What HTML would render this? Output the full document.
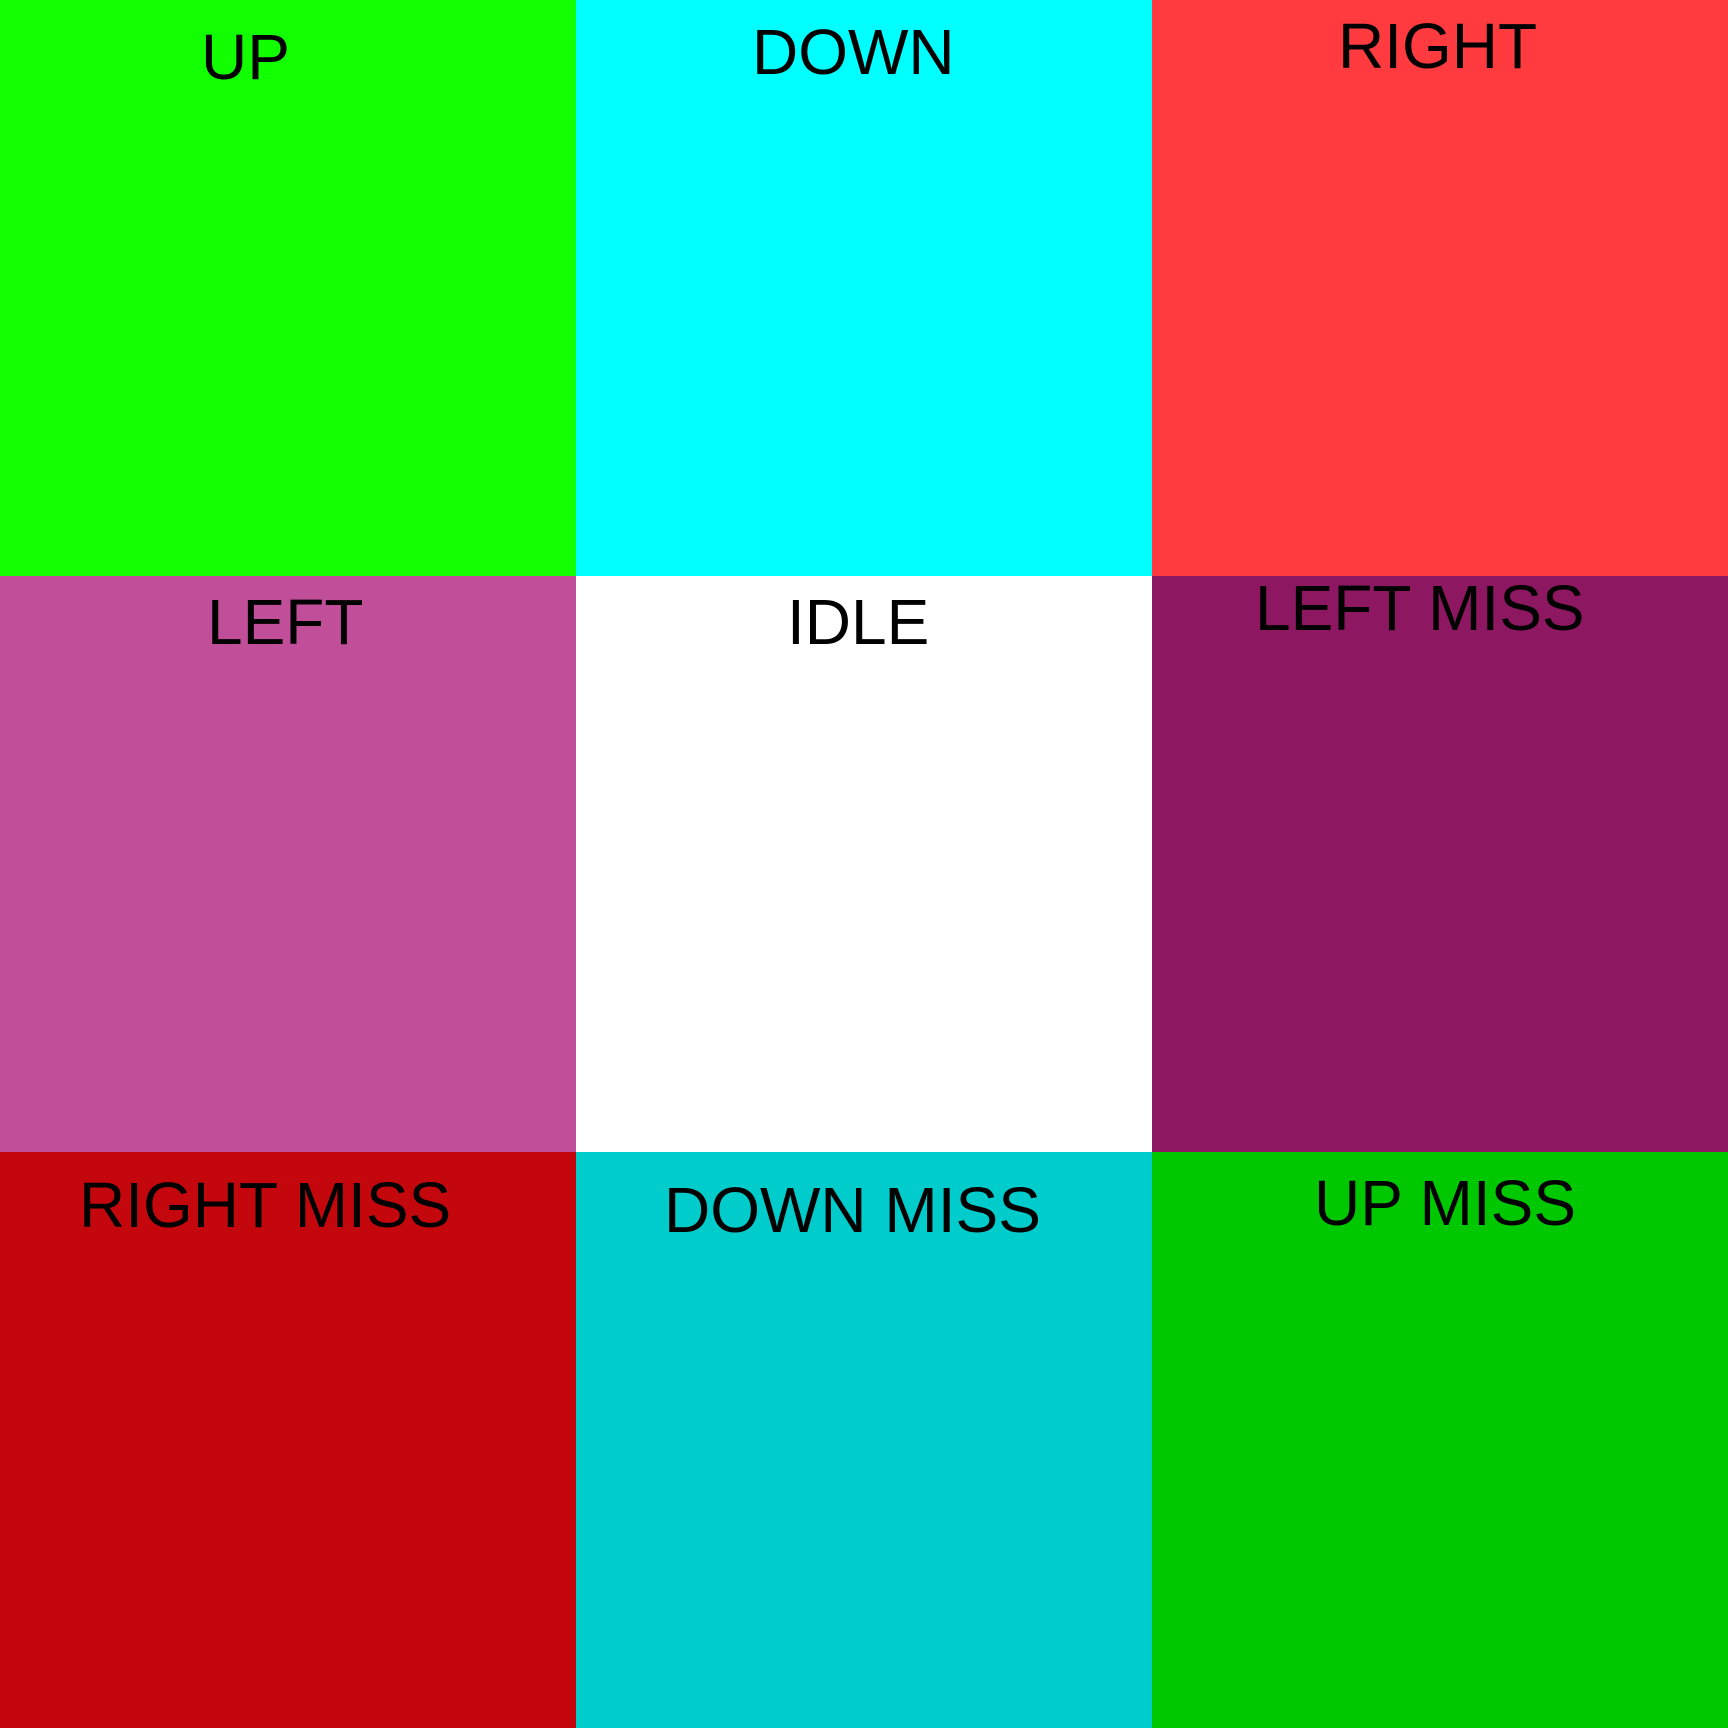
<!DOCTYPE html>
<html><head><meta charset="utf-8"><style>
html,body{margin:0;padding:0;width:1728px;height:1728px;overflow:hidden}
.c{position:absolute;width:576px;height:576px}
.t{position:absolute;font-family:"Liberation Sans",Arial,sans-serif;font-size:64px;line-height:1;color:#000;white-space:nowrap}
</style></head><body>
<div class="c" style="left:0;top:0;background:#11ff00"></div>
<div class="c" style="left:576px;top:0;background:#00ffff"></div>
<div class="c" style="left:1152px;top:0;background:#ff3b3f"></div>
<div class="c" style="left:0;top:576px;background:#c04e98"></div>
<div class="c" style="left:576px;top:576px;background:#ffffff"></div>
<div class="c" style="left:1152px;top:576px;background:#8e1762"></div>
<div class="c" style="left:0;top:1152px;background:#c4070c"></div>
<div class="c" style="left:576px;top:1152px;background:#00cccc"></div>
<div class="c" style="left:1152px;top:1152px;background:#00c800"></div>

<div class="t" style="left:201px;top:25px">UP</div>
<div class="t" style="left:752px;top:20px">DOWN</div>
<div class="t" style="left:1338px;top:14px">RIGHT</div>
<div class="t" style="left:207px;top:590px">LEFT</div>
<div class="t" style="left:787px;top:590px">IDLE</div>
<div class="t" style="left:1255px;top:576px">LEFT MISS</div>
<div class="t" style="left:79px;top:1173px">RIGHT MISS</div>
<div class="t" style="left:664px;top:1178px">DOWN MISS</div>
<div class="t" style="left:1314px;top:1171px">UP MISS</div>
</body></html>
